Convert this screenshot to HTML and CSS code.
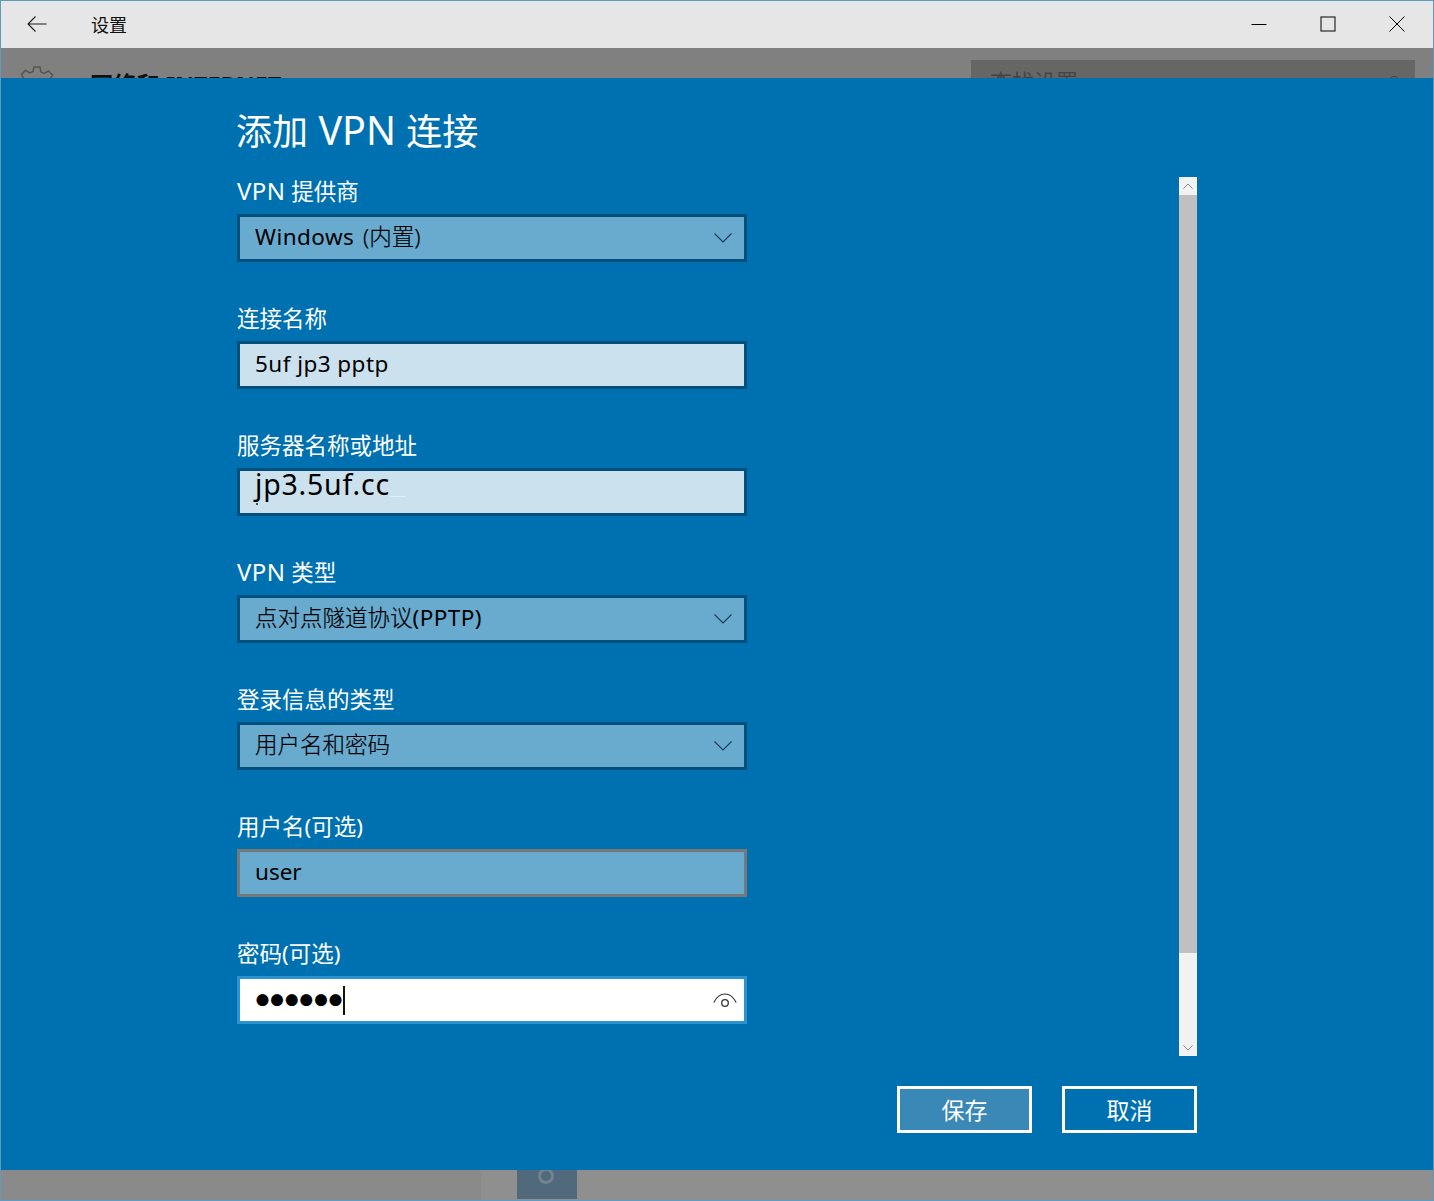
FILE: index.html
```html
<!DOCTYPE html>
<html lang="zh-CN">
<head>
<meta charset="utf-8">
<title>设置</title>
<link rel="stylesheet" href="styles.css">
</head>
<body>
<div class="window">
  <header class="titlebar">
    <svg class="back" width="20" height="16" viewBox="0 0 20 16"><path d="M8.500 .5 1 8l7.500 7.500M1 8h18.500" fill="none" stroke="#1a1a1a" stroke-width="1.100"/></svg>
    <span class="app-title">设置</span>
    <div class="win-controls">
      <svg class="win-icon" width="16" height="16" viewBox="0 0 16 16"><path d="M.5 8.500h15" stroke="#000" fill="none"/></svg>
      <svg class="win-icon" width="16" height="16" viewBox="0 0 16 16"><rect x="1" y="1" width="14" height="14" stroke="#000" fill="none" stroke-width="1"/></svg>
      <svg class="win-icon" width="16" height="16" viewBox="0 0 16 16"><path d="M.5 .5l15 15M15.500 .5l-15 15" stroke="#000" fill="none"/></svg>
    </div>
  </header>
  <div class="dim-top">
    <svg class="gear" width="34" height="34" viewBox="0 0 34 34"><path d="M14 1h6l1 5 3 1.500 4.500-2.500 4 4-2.500 4.500L31 16l3 1v1l-3 1-1 3 2.500 4.500-4 4L24 28l-3 1-1 5h-6l-1-5-3-1-4.500 2.500-4-4L4 22l-1-3-3-1v-1l3-1 1-3-2.500-4.500 4-4L10 7l3-1.500z" fill="none" stroke="#555" stroke-width="1.500"/></svg>
    <span class="crumb">网络和 INTERNET</span>
    <div class="search"><span>查找设置</span><i class="search-ring"></i></div>
  </div>
  <main class="dialog">
    <div class="dialog-body">
      <h1 class="dialog-title">添加 <span class="title-lat">VPN</span> 连接</h1>
      <div class="form-wrap">
        <form class="form">
          <div class="field">
            <div class="label"><span class="label-lat">VPN</span> 提供商</div>
            <div class="box select"><span><span class="lat wide-gap">Windows </span>(内置)</span><svg class="chev" width="18" height="10" viewBox="0 0 18 10"><path d="M.5 .5 9 9l8.500-8.500" fill="none" stroke="#143b55" stroke-width="1.100"/></svg></div>
          </div>
          <div class="field">
            <div class="label">连接名称</div>
            <div class="box text"><span class="lat">5uf jp3 pptp</span></div>
          </div>
          <div class="field">
            <div class="label">服务器名称或地址</div>
            <div class="box text pasted"><span>jp3.5uf.cc</span><i class="smudge"></i><i class="speck"></i></div>
          </div>
          <div class="field">
            <div class="label"><span class="label-lat">VPN</span> 类型</div>
            <div class="box select"><span>点对点隧道协议<span class="lat">(PPTP)</span></span><svg class="chev" width="18" height="10" viewBox="0 0 18 10"><path d="M.5 .5 9 9l8.500-8.500" fill="none" stroke="#143b55" stroke-width="1.100"/></svg></div>
          </div>
          <div class="field">
            <div class="label">登录信息的类型</div>
            <div class="box select"><span>用户名和密码</span><svg class="chev" width="18" height="10" viewBox="0 0 18 10"><path d="M.5 .5 9 9l8.500-8.500" fill="none" stroke="#143b55" stroke-width="1.100"/></svg></div>
          </div>
          <div class="field">
            <div class="label">用户名(可选)</div>
            <div class="box hover"><span>user</span></div>
          </div>
          <div class="field">
            <div class="label">密码(可选)</div>
            <div class="box focus"><span class="dots">●●●●●●</span><i class="caret"></i>
              <svg class="eye" width="24" height="14" viewBox="0 0 24 14"><path d="M.8 9.500C3.500 4 7.500 1 12 1s8.500 3 11.200 8.500" fill="none" stroke="#333" stroke-width="1.200"/><circle cx="12" cy="10" r="3.300" fill="none" stroke="#333" stroke-width="1.300"/></svg>
            </div>
          </div>
        </form>
        <div class="scrollbar">
          <div class="sb-btn"><svg width="10" height="6" viewBox="0 0 10 6"><path d="M.5 5.500 5 1l4.500 4.500" fill="none" stroke="#8a8a8a"/></svg></div>
          <div class="sb-thumb"></div>
          <div class="sb-rest"><svg width="10" height="6" viewBox="0 0 10 6"><path d="M.5 .5 5 5 9.500 .5" fill="none" stroke="#8a8a8a"/></svg></div>
        </div>
      </div>
      <div class="actions">
        <div class="btn btn-hover"><span class="btn-text">保存</span></div>
        <div class="btn"><span class="btn-text">取消</span></div>
      </div>
    </div>
  </main>
  <div class="dim-bottom">
    <div class="dim-nav"></div>
    <div class="tile"><i class="tile-ring"></i></div>
  </div>
</div>
</body>
</html>
```

FILE: styles.css
```css
* { box-sizing: border-box; }
html, body { margin: 0; padding: 0; }
body {
  width: 1434px;
  height: 1201px;
  overflow: hidden;
  font-family: "Noto Sans", "Noto Sans CJK SC", sans-serif;
  color: #000;
}
.window {
  width: 1434px;
  height: 1201px;
  border: 1px solid #5d9cc2;
  display: flex;
  flex-direction: column;
  background: #808080;
  overflow: hidden;
}
.titlebar {
  height: 47px;
  flex: none;
  background: #e6e6e6;
  display: flex;
  align-items: center;
  padding-left: 26px;
}
.back { flex: none; margin-top: -2px; }
.app-title { margin-left: 44px; margin-top: -2px; font-size: 18px; color: #111; }
.win-controls {
  margin-left: auto;
  display: flex;
  gap: 53px;
  padding-right: 28px;
  align-items: center;
  margin-top: -1px;
}
.win-icon { display: block; }
.dim-top {
  height: 30px;
  flex: none;
  background: #808080;
  overflow: hidden;
  display: flex;
  align-items: flex-start;
  padding-left: 19px;
}
.gear { margin-top: 18px; flex: none; }
.crumb {
  margin-left: 36px;
  margin-top: 22px;
  font-size: 23.300px;
  line-height: 30px;
  font-weight: 700;
  color: #111;
  white-space: nowrap;
}
.search {
  margin-left: auto;
  margin-right: 18px;
  margin-top: 12px;
  width: 444px;
  height: 40px;
  background: #666;
  color: #444;
  font-size: 22px;
  line-height: 30px;
  padding: 6px 19px;
  display: flex;
  justify-content: space-between;
}
.search-ring {
  width: 12px;
  height: 12px;
  border: 1px solid #444;
  border-radius: 50%;
  margin-top: 10px;
  margin-right: -4px;
}
.dialog {
  height: 1092px;
  flex: none;
  background: #0071b0;
  color: #fff;
}
.dialog-body {
  margin-left: 236px;
  width: 960px;
}
.dialog-title {
  margin: 0 0 0 -1px;
  padding-top: 27px;
  font-size: 36px;
  line-height: 54px;
  font-weight: 400;
  height: 99px;
  word-spacing: 1px;
  white-space: nowrap;
}
.title-lat { font-size: 39.500px; line-height: 0; }
.form-wrap {
  display: flex;
  justify-content: space-between;
  height: 879px;
}
.form { width: 510px; }
.field { height: 127px; }
.label {
  font-size: 22.500px;
  line-height: 30px;
  height: 37px;
  font-weight: 400;
  white-space: nowrap;
}
.label-lat { font-size: 24px; line-height: 0; letter-spacing: .4px; word-spacing: 2px; }
.box {
  width: 510px;
  height: 48px;
  border: 3px solid #004f7c;
  padding: 0 15px;
  display: flex;
  align-items: center;
  font-size: 22.500px;
  font-weight: 300;
  -webkit-text-stroke: .2px #000;
  position: relative;
  color: #000;
  white-space: nowrap;
}
.box > span { line-height: 42px; margin-top: -2px; }
.lat { letter-spacing: .45px; font-weight: 400; -webkit-text-stroke: 0; }
.wide-gap { word-spacing: 2.500px; }
.select { background: #69aacf; }
.text { background: #cce1ee; }
.hover { background: #69aacf; border-color: #787878; font-weight: 400; -webkit-text-stroke: 0; }
.focus { background: #fff; border-color: #2a93d0; }
.pasted > span { font-size: 28.500px; margin-top: -16px; letter-spacing: .8px; font-weight: 400; -webkit-text-stroke: 0; }
.smudge {
  position: absolute;
  left: 150px;
  top: 25px;
  width: 16px;
  height: 1px;
  background: #e4eff6;
}
.speck {
  position: absolute;
  left: 16px;
  top: 32px;
  width: 2px;
  height: 2px;
  background: #3f5563;
}
.chev { margin-left: auto; margin-right: -3px; }
.dots { font-size: 13px; letter-spacing: 1.600px; font-weight: 400; margin-left: 1px; }
.box > .dots { margin-top: 0; }
.caret {
  width: 2px;
  height: 29px;
  background: #111;
  margin-left: -1px;
  flex: none;
}
.eye { margin-left: auto; margin-right: -8px; margin-top: -1px; }
.scrollbar {
  width: 18px;
  flex: none;
  display: flex;
  flex-direction: column;
  background: #f2f2f2;
}
.sb-btn {
  height: 18px;
  flex: none;
  display: flex;
  align-items: center;
  justify-content: center;
}
.sb-thumb { height: 758px; flex: none; background: #c0c0c0; }
.sb-rest {
  flex: 1;
  display: flex;
  align-items: flex-end;
  justify-content: center;
  padding-bottom: 5px;
}
.actions {
  display: flex;
  justify-content: flex-end;
  gap: 30px;
  margin-top: 30px;
}
.btn {
  width: 135px;
  height: 47px;
  border: 3px solid #fff;
  color: #fff;
  font-size: 23px;
  display: flex;
  align-items: center;
  justify-content: center;
}
.btn-text { margin-top: -2px; }
.btn-hover { background: #3a88b5; }
.dim-bottom {
  height: 30px;
  flex: none;
  background: #8f8f8f;
  display: flex;
  overflow: hidden;
}
.dim-nav { width: 480px; flex: none; background: #8a8a8a; }
.tile {
  width: 60px;
  margin-left: 36px;
  height: 29px;
  background: #506a7c;
  display: flex;
  justify-content: center;
}
.tile-ring {
  width: 16px;
  height: 16px;
  margin-top: -2px;
  margin-left: -2px;
  border: 3px solid #72828e;
  border-radius: 50%;
}
```
